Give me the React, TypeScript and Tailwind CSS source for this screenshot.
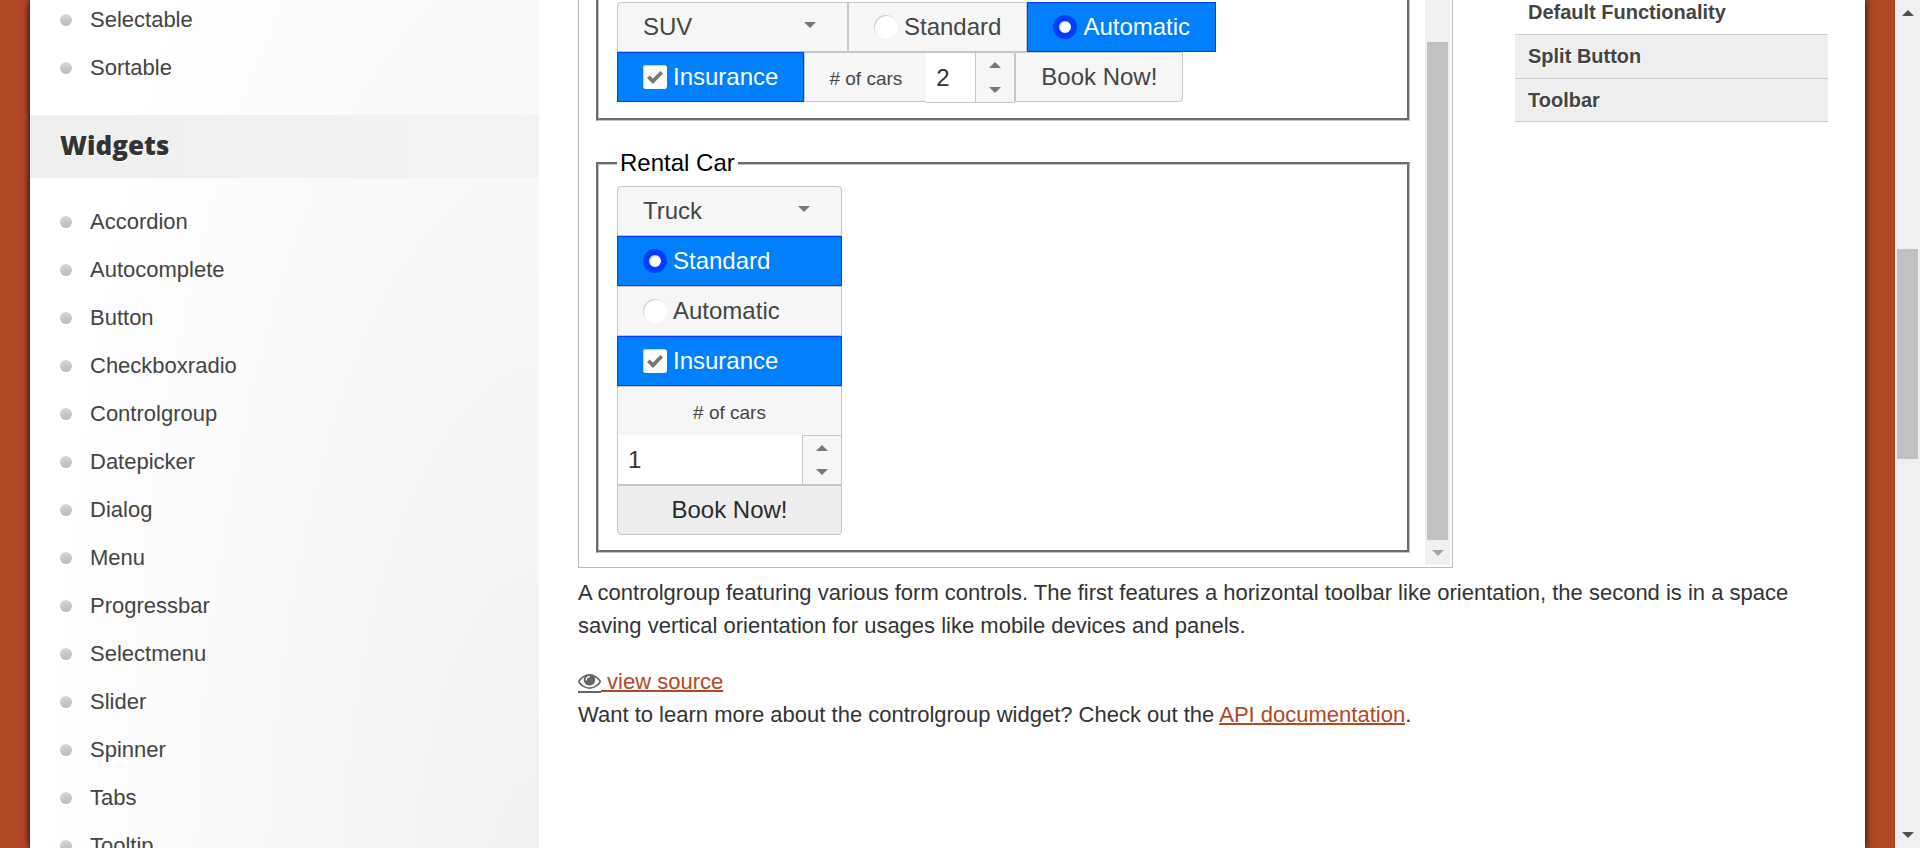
import { useState } from "react";

const interactions = ["Selectable", "Sortable"];
const widgets = [
  "Accordion",
  "Autocomplete",
  "Button",
  "Checkboxradio",
  "Controlgroup",
  "Datepicker",
  "Dialog",
  "Menu",
  "Progressbar",
  "Selectmenu",
  "Slider",
  "Spinner",
  "Tabs",
  "Tooltip",
];

function Triangle({ up = false, className = "" }: { up?: boolean; className?: string }) {
  return (
    <svg viewBox="0 0 12 6" className={`h-[6px] w-[12px] ${className}`} aria-hidden="true">
      <path d={up ? "M0 6 6 0l6 6z" : "M0 0h12L6 6z"} fill="currentColor" />
    </svg>
  );
}

function NavList({ items }: { items: string[] }) {
  return (
    <ul>
      {items.map((item) => (
        <li key={item} className="flex h-12 items-center gap-[18px] pl-[30px]">
          <span className="size-3 rounded-full bg-linear-to-b from-[#d8d8d8] to-[#b9b9b9]" />
          <a href="#" className="pb-[2px] text-[22px] text-[#444]">
            {item}
          </a>
        </li>
      ))}
    </ul>
  );
}

function VehicleSelect({ label, value, className }: { label: string; value: string; className: string }) {
  return (
    <div className={`relative h-[50px] ${className}`}>
      <select
        aria-label={label}
        defaultValue={value}
        className="size-full appearance-none rounded-[inherit] border border-[#c5c5c5] bg-[#f6f6f6] px-[25px] text-[#454545]"
      >
        <option>Compact car</option>
        <option>Midsize car</option>
        <option>SUV</option>
        <option>Luxury</option>
        <option>Truck</option>
        <option>Van</option>
      </select>
      <Triangle className="pointer-events-none absolute top-5 right-8 text-[#777]" />
    </div>
  );
}

type ToggleProps = {
  kind: "radio" | "checkbox";
  label: string;
  name?: string;
  checked: boolean;
  onChange: () => void;
};

function Toggle({ kind, label, name, checked, onChange }: ToggleProps) {
  return (
    <label
      className={`flex h-[50px] items-center gap-[6px] border px-[25px] ${
        checked ? "border-[#003eff] bg-[#007fff] text-white" : "border-[#c5c5c5] bg-[#f6f6f6] text-[#454545]"
      }`}
    >
      <span className="relative flex size-6 items-center justify-center">
        <input
          type={kind}
          name={name}
          checked={checked}
          onChange={onChange}
          className={`size-6 appearance-none bg-white shadow-[inset_1px_1px_1px_#ccc] ${
            kind === "radio"
              ? "rounded-full checked:border-[6px] checked:border-[#003eff]"
              : "rounded-[3px]"
          }`}
        />
        {kind === "checkbox" && checked && (
          <svg viewBox="0 0 16 13" className="pointer-events-none absolute h-[13px] w-4" aria-hidden="true">
            <path d="M0 7 2.6 4.6 6 7.6 13.4 0 16 2.4 6 13z" fill="#777" />
          </svg>
        )}
      </span>
      {label}
    </label>
  );
}

function SpinButtons({ onStep, className = "" }: { onStep: (step: number) => void; className?: string }) {
  return (
    <div className={`flex w-[39px] flex-col bg-[#f6f6f6] text-[#777] ${className}`}>
      <button aria-label="Increase" onClick={() => onStep(1)} className="flex flex-1 items-center justify-center">
        <Triangle up />
      </button>
      <button aria-label="Decrease" onClick={() => onStep(-1)} className="flex flex-1 items-center justify-center">
        <Triangle />
      </button>
    </div>
  );
}

function HorizontalGroup() {
  const [gear, setGear] = useState("Automatic");
  const [insured, setInsured] = useState(true);
  const [cars, setCars] = useState(2);
  return (
    <div>
      <div className="flex">
        <VehicleSelect label="Horizontal car type" value="SUV" className="w-[231px] rounded-tl-[4px]" />
        {["Standard", "Automatic"].map((g) => (
          <Toggle key={g} kind="radio" name="gear-h" label={g} checked={gear === g} onChange={() => setGear(g)} />
        ))}
      </div>
      <div className="flex">
        <Toggle kind="checkbox" label="Insurance" checked={insured} onChange={() => setInsured(!insured)} />
        <label
          htmlFor="cars-h"
          className="flex h-[50px] items-center border-y border-l border-[#c5c5c5] bg-[#f6f6f6] px-6 pt-1 text-[19px] text-[#454545]"
        >
          # of cars
        </label>
        <div className="flex h-[51px] border-y border-r border-[#c5c5c5]">
          <input
            id="cars-h"
            value={cars}
            onChange={(e) => setCars(Number(e.target.value) || 0)}
            className="w-[49px] bg-white pl-[10px] text-[#333]"
          />
          <SpinButtons onStep={(s) => setCars(cars + s)} className="border-l border-[#c5c5c5]" />
        </div>
        <button className="h-[50px] rounded-br-[4px] border border-[#c5c5c5] bg-[#f6f6f6] px-[25px] text-[#454545]">
          Book Now!
        </button>
      </div>
    </div>
  );
}

function VerticalGroup() {
  const [gear, setGear] = useState("Standard");
  const [insured, setInsured] = useState(true);
  const [cars, setCars] = useState(1);
  return (
    <div className="flex w-[225px] flex-col">
      <VehicleSelect label="Vertical car type" value="Truck" className="w-full rounded-t-[4px]" />
      {["Standard", "Automatic"].map((g) => (
        <Toggle key={g} kind="radio" name="gear-v" label={g} checked={gear === g} onChange={() => setGear(g)} />
      ))}
      <Toggle kind="checkbox" label="Insurance" checked={insured} onChange={() => setInsured(!insured)} />
      <label
        htmlFor="cars-v"
        className="flex h-[49px] items-center justify-center border-x border-t border-[#c5c5c5] bg-[#f6f6f6] pt-1 text-[19px] text-[#454545]"
      >
        # of cars
      </label>
      <div className="flex h-[50px] border-x border-b border-[#c5c5c5]">
        <input
          id="cars-v"
          value={cars}
          onChange={(e) => setCars(Number(e.target.value) || 0)}
          className="min-w-0 flex-1 bg-white pl-[10px] text-[#333]"
        />
        <SpinButtons onStep={(s) => setCars(cars + s)} className="border-t border-l border-[#c5c5c5]" />
      </div>
      <button className="h-[50px] rounded-b-[4px] border border-[#c5c5c5] bg-[#ededed] text-[#2b2b2b]">
        Book Now!
      </button>
    </div>
  );
}

function Eye() {
  return (
    <span className="inline-block border-b-2 border-[#666] pb-[2px] align-[-4px]">
      <svg viewBox="0 384 1792 1152" className="block h-[15px] w-[23px]" aria-hidden="true">
        <path
          fill="#666"
          d="M1664 960q-152-236-381-353 61 104 61 225 0 185-131.5 316.5t-316.5 131.5-316.5-131.5-131.5-316.5q0-121 61-225-229 117-381 353 133 205 333.5 326.5t434.5 121.5 434.5-121.5 333.5-326.5zm-720-384q0-20-14-34t-34-14q-125 0-214.5 89.5t-89.5 214.5q0 20 14 34t34 14 34-14 14-34q0-86 61-147t147-61q20 0 34-14t14-34zm848 384q0 34-20 69-140 230-376.5 368.5t-499.5 138.5-499.5-139-376.5-368q-20-35-20-69t20-69q140-229 376.5-368t499.5-139 499.5 139 376.5 368q20 35 20 69z"
        />
      </svg>
    </span>
  );
}

const fieldset =
  "min-w-0 border-[3px] [border-style:groove] border-[#c0c0c0] px-[18px]";

export default function App() {
  return (
    <div className="flex h-screen overflow-hidden bg-[#b24926] font-['Liberation_Sans',Arial,sans-serif] text-[#333]">
      <div className="mx-[30px] flex min-w-0 flex-1 bg-white shadow-[0_0_8px_#000]">
        <aside className="w-[509px] shrink-0 bg-[radial-gradient(100%_170%_at_100%_110%,#f0f0f0,#ffffff)]">
          <div className="-mt-1">
            <NavList items={interactions} />
          </div>
          <h3 className="mt-[23px] mb-5 flex h-[63px] items-center bg-linear-to-r from-[#eeeeee] to-[#f3f3f3] pb-[2px] pl-[30px] font-['Open_Sans',sans-serif] text-[26px] font-extrabold text-[#333] [text-shadow:1px_1px_0_#fff]">
            Widgets
          </h3>
          <NavList items={widgets} />
        </aside>

        <main className="ml-[39px] flex min-w-0 flex-1 items-start justify-between pr-[37px]">
          <div className="min-w-0 flex-1">
            <div className="flex h-[568px] max-w-[875px] border border-t-0 border-[#bbb] text-[24px]">
              <div className="flex flex-1 flex-col pr-[15px] pl-[17px]">
                <fieldset className={`${fieldset} -mt-1 h-[125px] shrink-0 pt-[3px]`}>
                  <HorizontalGroup />
                </fieldset>
                <fieldset className={`${fieldset} mt-[23px] pt-[3px] pb-[15px]`}>
                  <legend className="h-[39px] px-[3px] pt-[1px] text-black">Rental Car</legend>
                  <VerticalGroup />
                </fieldset>
              </div>
              <div className="mr-[2px] mb-[2px] flex w-[25px] flex-col items-center bg-[#f0f0f0]">
                <div className="mt-[42px] w-[21px] flex-1 bg-[#c1c1c1]" />
                <div className="flex h-[25px] items-center">
                  <Triangle className="text-[#a3a3a3]" />
                </div>
              </div>
            </div>
            <p className="mt-2 text-[22px] leading-[33px]">
              A controlgroup featuring various form controls. The first features a horizontal toolbar like orientation,
              the second is in a space saving vertical orientation for usages like mobile devices and panels.
            </p>
            <div className="mt-[23px] text-[22px] leading-[33px]">
              <a href="#" className="text-[#b24926] underline decoration-2">
                <Eye /> view source
              </a>
              <p>
                Want to learn more about the controlgroup widget? Check out the{" "}
                <a href="#" className="text-[#b24926] underline decoration-2">
                  API documentation
                </a>
                .
              </p>
            </div>
          </div>
          <ul className="-mt-[10px] -ml-[301px] w-[313px] shrink-0 text-[20px] font-bold text-[#444]">
            <li className="flex h-11 items-center px-[13px]">
              <a href="#">Default Functionality</a>
            </li>
            <li className="flex h-11 items-center border-t border-[#ccc] bg-[#eee] px-[13px] pb-[2px] [text-shadow:1px_1px_0_#fff]">
              <a href="#">Split Button</a>
            </li>
            <li className="flex h-11 items-center border-y border-[#ccc] bg-[#eee] px-[13px] [text-shadow:1px_1px_0_#fff]">
              <a href="#">Toolbar</a>
            </li>
          </ul>
        </main>
      </div>

      <div className="flex w-[25px] shrink-0 flex-col items-center bg-[#f0f0f0] text-[#505050]">
        <div className="flex h-[249px] items-start pt-[10px]">
          <Triangle up />
        </div>
        <div className="h-[210px] w-[21px] bg-[#c1c1c1]" />
        <div className="flex flex-1 items-end pb-[10px]">
          <Triangle />
        </div>
      </div>
    </div>
  );
}
